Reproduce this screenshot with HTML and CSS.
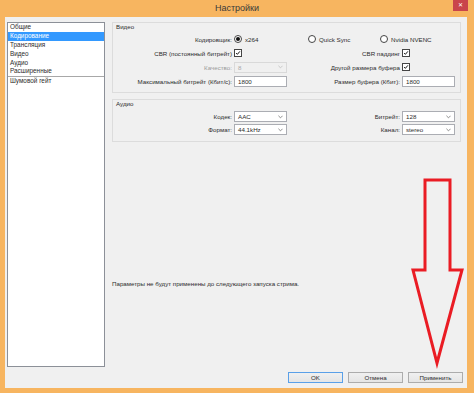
FILE: index.html
```html
<!DOCTYPE html>
<html lang="ru">
<head>
  <meta charset="UTF-8" />
  <title>Настройки</title>
  <link rel="stylesheet" href="styles.css">
</head>
<body>
  <div class="window">
    <!-- Title bar -->
    <div class="titlebar">
      <span class="title">Настройки</span>
      <span class="close">&#x2715;</span>
    </div>

    <div class="content">
      <div class="main">
        <!-- Sections list -->
        <ul class="nav">
          <li>Общие</li>
          <li class="active">Кодирование</li>
          <li>Трансляция</li>
          <li>Видео</li>
          <li>Аудио</li>
          <li>Расширенные</li>
          <li class="divider"></li>
          <li>Шумовой гейт</li>
        </ul>

        <div class="panel">
          <!-- Video -->
          <div class="group">
            <div class="group-title">Видео</div>
            <div class="form">
              <span class="label">Кодировщик:</span>
              <div class="radios">
                <span class="opt"><span class="radio on"></span>x264</span>
                <span class="opt"><span class="radio"></span>Quick Sync</span>
                <span class="opt"><span class="radio"></span>Nvidia NVENC</span>
              </div>

              <span class="label">CBR (постоянный битрейт)</span>
              <span class="check"><svg viewBox="0 0 8 8"><polyline points="1.5,4 3.2,5.8 6.5,1.8" /></svg></span>
              <span class="label">CBR паддинг</span>
              <span class="check"><svg viewBox="0 0 8 8"><polyline points="1.5,4 3.2,5.8 6.5,1.8" /></svg></span>

              <span class="label muted">Качество:</span>
              <span class="field combo disabled">8<svg viewBox="0 0 6 4"><polyline points="0.5,0.5 3,3 5.5,0.5" /></svg></span>
              <span class="label">Другой размера буфера</span>
              <span class="check"><svg viewBox="0 0 8 8"><polyline points="1.5,4 3.2,5.8 6.5,1.8" /></svg></span>

              <span class="label">Максимальный битрейт (Кбит/с):</span>
              <span class="field">1800</span>
              <span class="label">Размер буфера (Кбит):</span>
              <span class="field">1800</span>
            </div>
          </div>

          <!-- Audio -->
          <div class="group audio">
            <div class="group-title">Аудио</div>
            <div class="form tight">
              <span class="label">Кодек:</span>
              <span class="field combo">AAC<svg viewBox="0 0 6 4"><polyline points="0.5,0.5 3,3 5.5,0.5" /></svg></span>
              <span class="label">Битрейт:</span>
              <span class="field combo">128<svg viewBox="0 0 6 4"><polyline points="0.5,0.5 3,3 5.5,0.5" /></svg></span>

              <span class="label">Формат:</span>
              <span class="field combo">44.1kHz<svg viewBox="0 0 6 4"><polyline points="0.5,0.5 3,3 5.5,0.5" /></svg></span>
              <span class="label">Канал:</span>
              <span class="field combo">stereo<svg viewBox="0 0 6 4"><polyline points="0.5,0.5 3,3 5.5,0.5" /></svg></span>
            </div>
          </div>

          <p class="notice">Параметры не будут применены до следующего запуска стрима.</p>
        </div>
      </div>

      <!-- Dialog buttons -->
      <div class="buttons">
        <span class="btn default">OK</span>
        <span class="btn">Отмена</span>
        <span class="btn">Применить</span>
      </div>
    </div>

    <!-- Red annotation arrow -->
    <svg class="arrow" viewBox="0 0 474 393">
      <polygon points="425,180 450,180 450,270 462,270 437,363 413,270 425,270" />
    </svg>
  </div>
</body>
</html>
```

FILE: styles.css
```css
* { box-sizing: border-box; margin: 0; padding: 0; }
body {
  width: 474px; height: 393px;
  background: #f7b560;
  font-family: 'Liberation Sans', Arial, sans-serif;
  font-size: 6.2px;
  color: #2c2c2c;
  overflow: hidden;
}
.window {
  position: relative;
  height: 393px;
  display: flex; flex-direction: column;
}

/* —— Title bar —— */
.titlebar {
  height: 17px;
  display: grid; grid-template-columns: 1fr auto 1fr;
  align-items: start;
}
.title {
  grid-column: 2;
  font-size: 9px; line-height: 16px;
  color: #3a3a3a;
}
.close {
  grid-column: 3; justify-self: end;
  width: 15px; height: 11px; margin-right: 6px;
  background: #c9454b; color: #fff;
  font-size: 6px; line-height: 11px; text-align: center;
}

/* —— Dialog body —— */
.content {
  flex: 1;
  margin: 0 7px 5px 5px;
  padding: 5px 4px 5px 2px;
  background: #f0f0f0;
  display: flex; flex-direction: column;
}
.main { flex: 1; display: flex; gap: 7px; }

.nav {
  width: 98px;
  background: #fff; border: 1px solid #8c9098;
  list-style: none;
  font-size: 6.4px;
}
.nav li { height: 8.9px; line-height: 8.9px; padding-left: 2px; white-space: nowrap; }
.nav li.active { background: #3399ff; color: #fff; }
.nav li.divider { height: 1px; background: #a8a8a8; }

.panel {
  flex: 1; margin-right: 2px;
  display: flex; flex-direction: column;
}
.group {
  border: 1px solid #dcdcdc;
  padding: 0 5px 5px 6px;
}
.group.audio { margin-top: 6px; }
.group-title { height: 7px; line-height: 7px; margin-left: -3px; }

.form {
  display: grid;
  grid-template-columns: 115px 53px 1fr 53px;
  grid-auto-rows: 12px;
  row-gap: 2px;
  margin-top: 3px;
  align-items: center;
}
.form.tight { row-gap: 1px; margin-top: 3.5px; }
.label { text-align: right; padding-right: 2px; white-space: nowrap; }
.label.muted { color: #9a9a9a; }

.radios {
  grid-column: 2 / 5;
  display: grid; grid-template-columns: 74px 72px auto;
}
.opt { display: flex; align-items: center; gap: 3px; }
.radio {
  width: 8px; height: 8px; border-radius: 50%;
  border: 1px solid #444; background: #fff;
  display: flex; align-items: center; justify-content: center;
}
.radio.on::after {
  content: ''; width: 4px; height: 4px; border-radius: 50%; background: #111;
}
.check {
  width: 8px; height: 8px;
  border: 1px solid #444; background: #fff;
  display: flex;
}
.check svg { width: 100%; height: 100%; }
.check polyline { fill: none; stroke: #111; stroke-width: 1.3; }

.field {
  height: 11px;
  border: 1px solid #abadb3; background: #fff;
  padding: 0 3px;
  display: flex; align-items: center; justify-content: space-between;
}
.field svg { width: 5px; height: 4px; }
.field polyline { fill: none; stroke: #777; stroke-width: 1; }
.field.disabled { background: #f0f0f0; border-color: #d9d9d9; color: #a8a8a8; }
.field.disabled polyline { stroke: #c0c0c0; }

.notice { margin-top: auto; margin-bottom: 79px; line-height: 8px; }

/* —— Buttons —— */
.buttons {
  display: flex; justify-content: flex-end; gap: 5px;
  margin-top: 5px; height: 11px;
}
.btn {
  width: 55px; height: 11px;
  border: 1px solid #acacac;
  background: linear-gradient(#f0f0f0, #e5e5e5);
  line-height: 9px; text-align: center;
}
.btn.default { border-color: #5aa0e8; }

/* —— Annotation —— */
.arrow {
  position: absolute; top: 0; left: 0;
  width: 474px; height: 393px;
  pointer-events: none;
}
.arrow polygon { fill: none; stroke: #ea1c24; stroke-width: 3; stroke-linejoin: miter; }
```
